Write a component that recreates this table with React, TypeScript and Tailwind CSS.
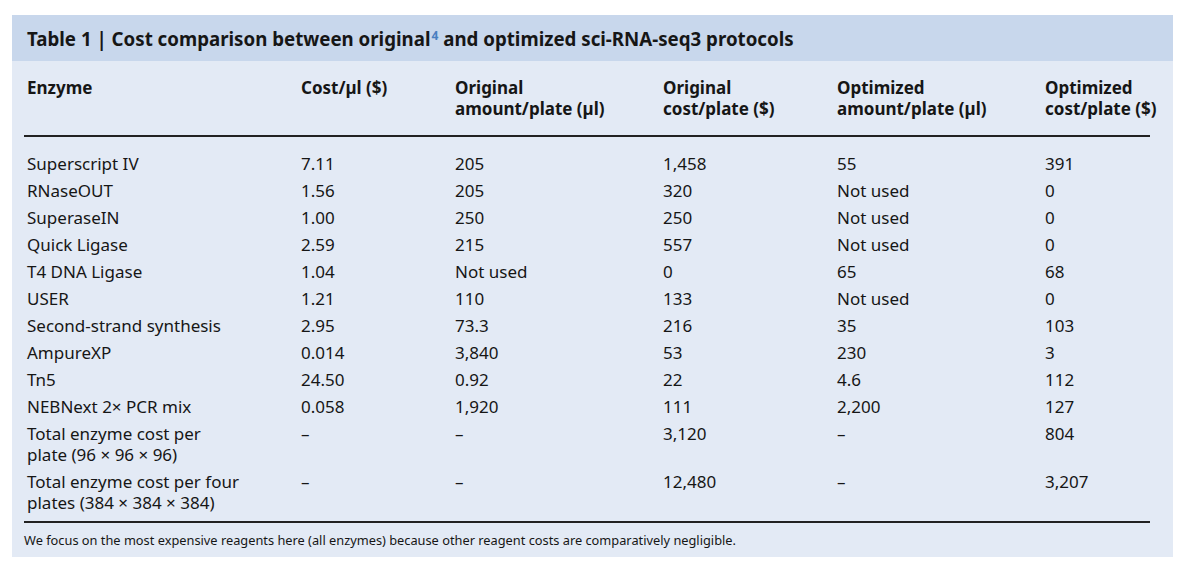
import React from 'react';

const rows: string[][] = [
  ['Superscript IV', '7.11', '205', '1,458', '55', '391'],
  ['RNaseOUT', '1.56', '205', '320', 'Not used', '0'],
  ['SuperaseIN', '1.00', '250', '250', 'Not used', '0'],
  ['Quick Ligase', '2.59', '215', '557', 'Not used', '0'],
  ['T4 DNA Ligase', '1.04', 'Not used', '0', '65', '68'],
  ['USER', '1.21', '110', '133', 'Not used', '0'],
  ['Second-strand synthesis', '2.95', '73.3', '216', '35', '103'],
  ['AmpureXP', '0.014', '3,840', '53', '230', '3'],
  ['Tn5', '24.50', '0.92', '22', '4.6', '112'],
  ['NEBNext 2× PCR mix', '0.058', '1,920', '111', '2,200', '127'],
  ['Total enzyme cost per\nplate (96 × 96 × 96)', '–', '–', '3,120', '–', '804'],
  ['Total enzyme cost per four\nplates (384 × 384 × 384)', '–', '–', '12,480', '–', '3,207'],
];

const headers = [
  ['Enzyme'],
  ['Cost/µl ($)'],
  ['Original', 'amount/plate (µl)'],
  ['Original', 'cost/plate ($)'],
  ['Optimized', 'amount/plate (µl)'],
  ['Optimized', 'cost/plate ($)'],
];

const grid = 'grid grid-cols-[274px_154px_208px_174px_208px_120px]';

export default function App() {
  return (
    <div className="min-h-[574px] bg-white pt-[15px] pl-[12px] text-[#161616]" style={{ fontFamily: '"Noto Sans", sans-serif' }}>
      <div className="w-[1161px] h-[542px] bg-[#e3eaf5]">
        {/* title band */}
        <div className="h-[46px] bg-[#c8d7ec] flex items-center pl-[15px] pt-[2px]">
          <h1 className="text-[18.7px] font-bold">
            Table 1 | Cost comparison between original
            <sup className="text-[#4a7fc1] text-[12px] ml-[1px]">4</sup> and optimized sci-RNA-seq3 protocols
          </h1>
        </div>

        <div className="px-[12px] w-[1150px]">
          {/* column headings */}
          <div className={`${grid} pt-[16px] pb-[16px] border-b-2 border-[#222]`}>
            {headers.map((h, i) => (
              <div key={i} className="pl-[3px] text-[17px] font-bold leading-[21px]">
                {h.map((l) => (
                  <div key={l}>{l}</div>
                ))}
              </div>
            ))}
          </div>

          {/* body */}
          <div className="pt-[13px] pb-[5px] border-b-2 border-[#222]">
            {rows.map((r, i) => (
              <div key={i} className={`${grid} py-[3px]`}>
                {r.map((c, j) => (
                  <div key={j} className="pl-[3px] text-[17px] leading-[21px] whitespace-pre-line">
                    {c}
                  </div>
                ))}
              </div>
            ))}
          </div>

          <p className="pt-[8px] text-[12.8px] leading-[18px]">
            We focus on the most expensive reagents here (all enzymes) because other reagent costs are comparatively negligible.
          </p>
        </div>
      </div>
    </div>
  );
}
